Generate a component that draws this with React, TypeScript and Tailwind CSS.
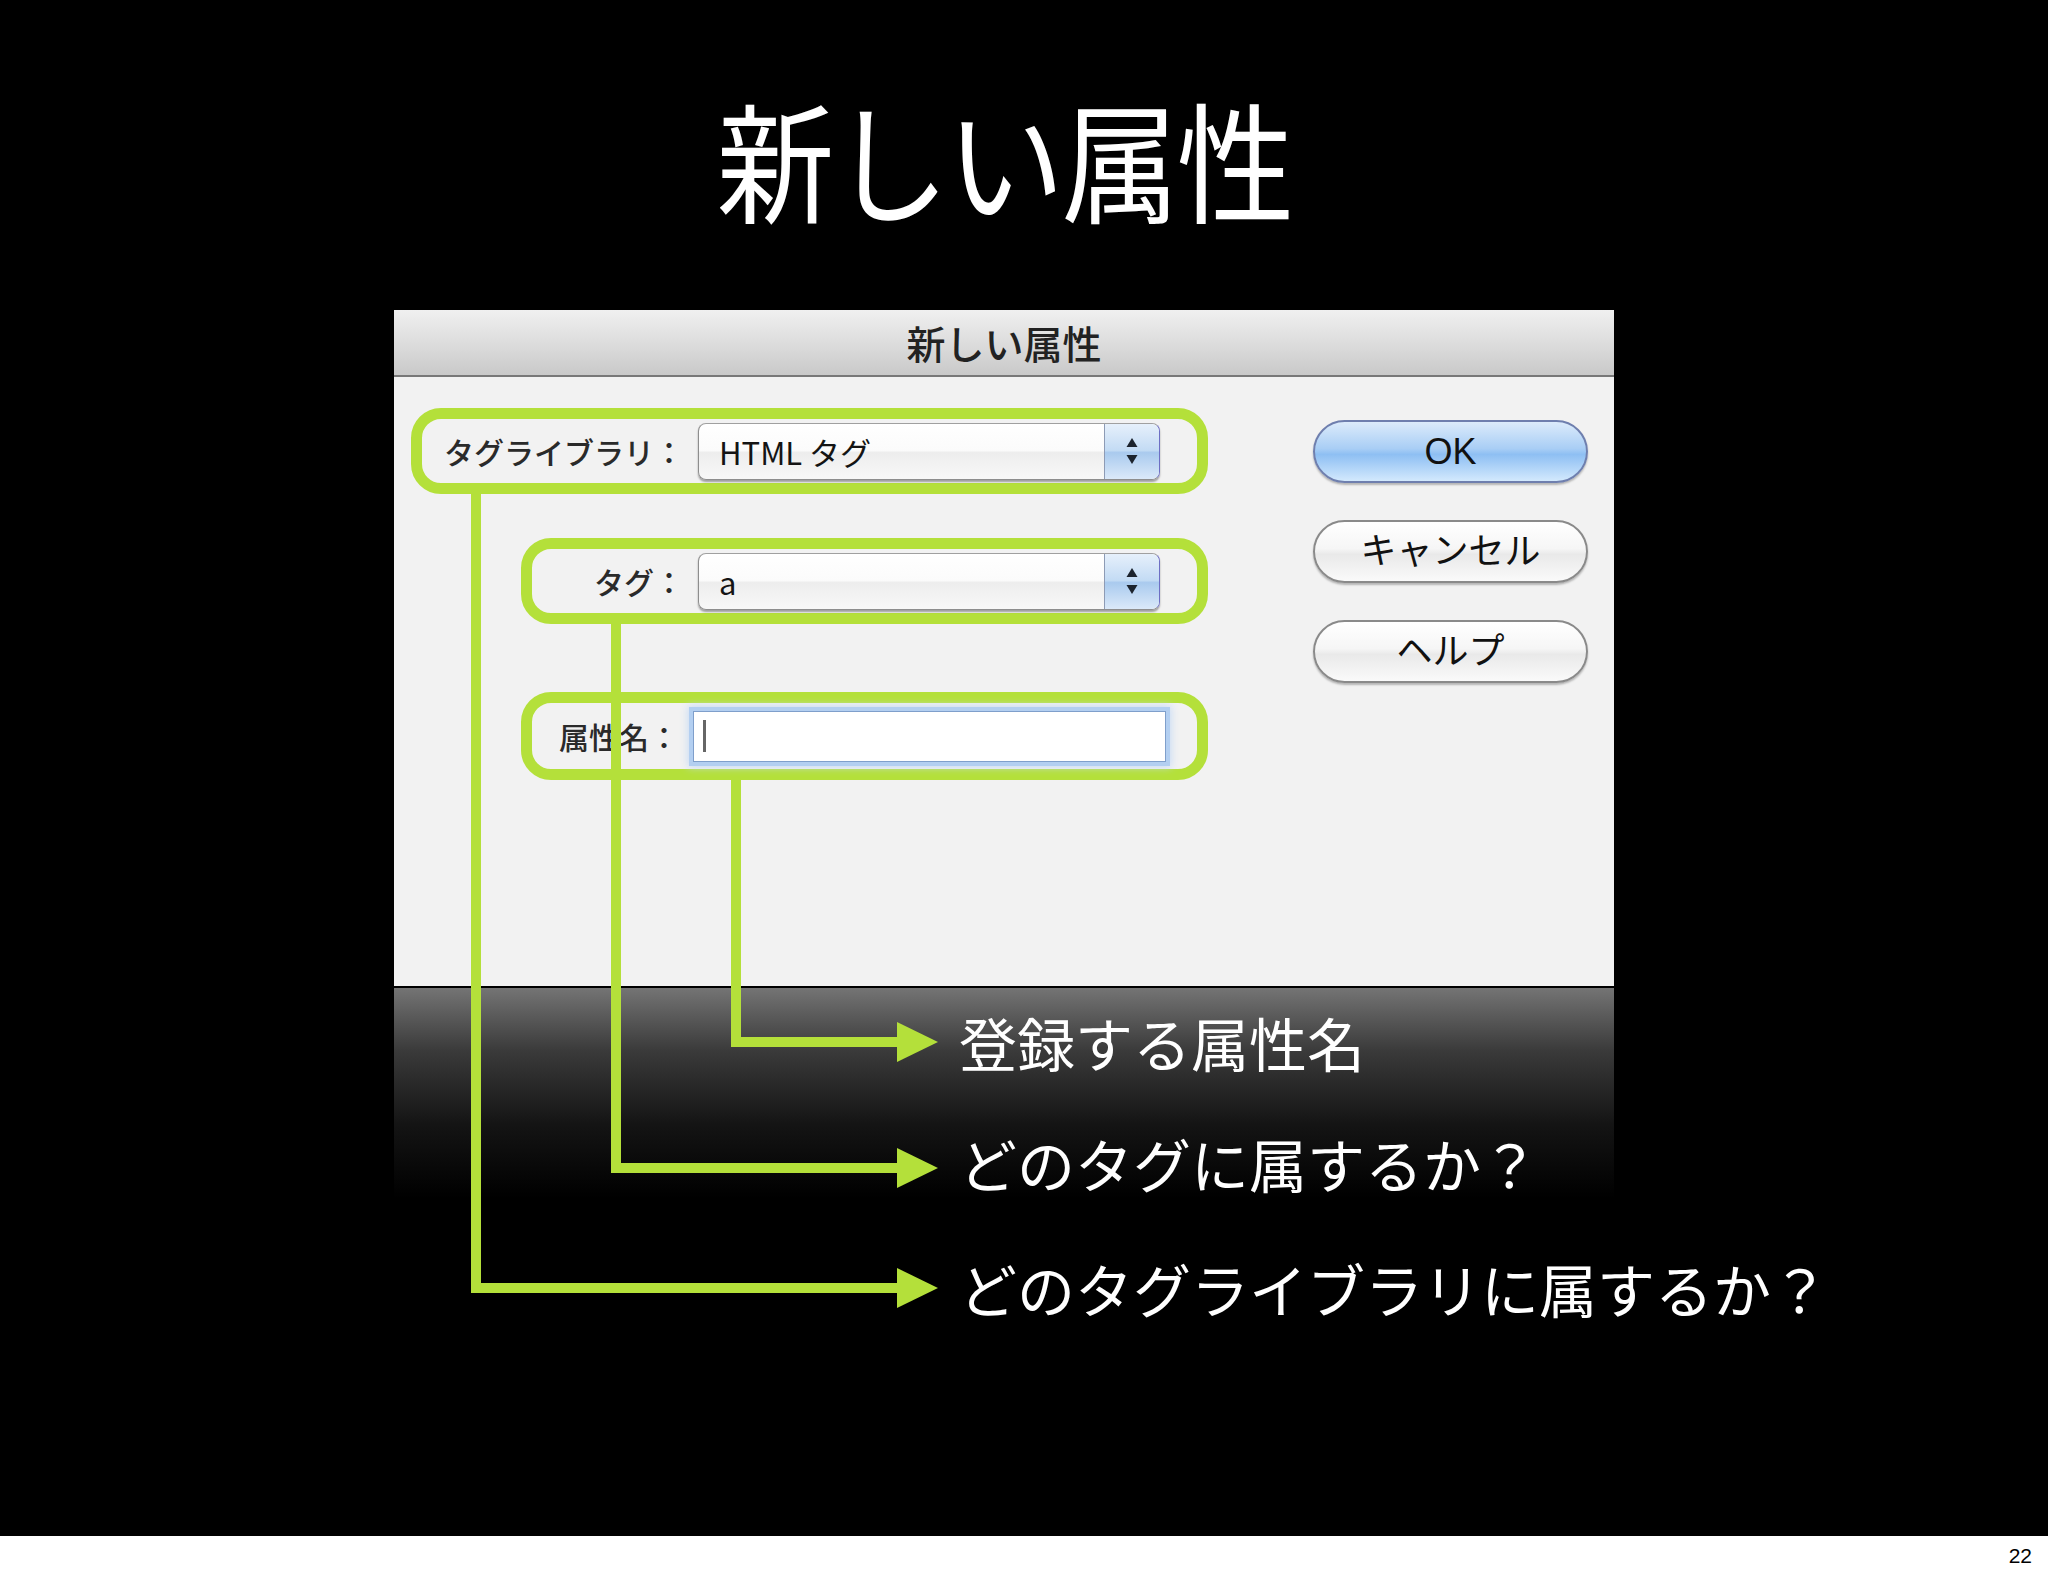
import React from 'react';

const JP = "font-['Noto_Sans_CJK_JP','Noto_Sans',sans-serif]";

function Stepper() {
  return (
    <div className="w-[55px] h-full border-l border-[#8d9bb5] rounded-r-[7px] bg-[linear-gradient(to_bottom,#e6f0fb,#c3dbf4_48%,#a9caee_52%,#dbe9f9)] flex items-center justify-center">
      <svg width="14" height="32" viewBox="0 0 14 32">
        <path d="M7 3 L12.5 12 H1.5 Z" fill="#1c232d" />
        <path d="M7 29 L12.5 20 H1.5 Z" fill="#1c232d" />
      </svg>
    </div>
  );
}

function Select({ value }: { value: string }) {
  return (
    <div className="w-[462px] h-[57px] rounded-[8px] border border-[#8e8e8e] border-r-[#6d6fc4] border-t-[#a0a0a0] bg-[linear-gradient(to_bottom,#ffffff,#fbfbfb_48%,#ededed_52%,#f8f8f8)] shadow-[0_2px_2px_rgba(0,0,0,0.35)] flex items-stretch overflow-hidden">
      <div className="flex-1 flex items-center pl-[20px] text-[31px] text-[#141414] leading-none">{value}</div>
      <Stepper />
    </div>
  );
}

function Field({ label, labelWidth, children, className }: { label: string; labelWidth: string; children: React.ReactNode; className: string }) {
  return (
    <div className={`border-[11px] border-[#b4e03a] rounded-[30px] flex items-center ${className}`}>
      <div className={`${labelWidth} text-right pr-[14px] text-[30px] font-medium text-[#2a2a2a] whitespace-nowrap`}>{label}</div>
      {children}
    </div>
  );
}

function AquaButton({ label, primary }: { label: string; primary?: boolean }) {
  return (
    <div
      className={`w-[275px] h-[63px] rounded-full border-2 flex items-center justify-center text-[36px] text-[#111] shadow-[0_2px_2px_rgba(0,0,0,0.25)] font-['Liberation_Sans','Noto_Sans_CJK_JP',sans-serif] ${
        primary
          ? 'border-[#6f7fae] bg-[linear-gradient(to_bottom,#dcebfb,#a9cef5_45%,#8ebff3_55%,#d3e9fd)]'
          : 'border-[#8a8a8a] bg-[linear-gradient(to_bottom,#ffffff,#f6f6f6_45%,#e9e9e9_55%,#fafafa)]'
      }`}
    >
      {label}
    </div>
  );
}

export default function App() {
  const green = '#b4e03a';
  return (
    <div className={`relative w-[2048px] h-[1576px] bg-black flex flex-col ${JP}`}>
      <div className="flex-1 flex flex-col">
        <div className="ml-[394px] w-[1220px] h-[310px] flex items-center justify-center pt-[4px] text-white text-[118px] leading-none tracking-[-3px]">
          <span className="scale-y-110">新しい属性</span>
        </div>

        <div className="ml-[394px] w-[1220px] flex flex-col">
          <div className="h-[67px] border-b-2 border-[#787878] bg-[linear-gradient(to_bottom,#f0f0f0,#d9d9d9_60%,#c9c9c9)] flex items-center justify-center text-[39px] font-medium text-[#222]">
            新しい属性
          </div>

          <div className="h-[611px] border-b-2 border-black bg-[#f2f2f2] flex items-start pl-[17px] pt-[31px]">
            <div className="w-[797px] flex flex-col">
              <Field label="タグライブラリ：" labelWidth="w-[276px]" className="w-[797px] h-[86px]">
                <Select value="HTML タグ" />
              </Field>
              <Field label="タグ：" labelWidth="w-[166px]" className="ml-[110px] mt-[44px] w-[687px] h-[86px]">
                <Select value="a" />
              </Field>
              <Field label="属性名：" labelWidth="w-[161px]" className="ml-[110px] mt-[68px] w-[687px] h-[88px]">
                <div className="w-[473px] h-[51px] bg-white border border-[#7f9fcb] shadow-[0_0_0_4px_#b3cff1,0_0_8px_5px_#c6daf5] flex items-center pl-[9px]">
                  <div className="w-[3px] h-[32px] bg-[#666]" />
                </div>
              </Field>
            </div>

            <div className="ml-[105px] mt-[12px] flex flex-col gap-[37px]">
              <AquaButton label="OK" primary />
              <AquaButton label="キャンセル" />
              <AquaButton label="ヘルプ" />
            </div>
          </div>

          <div className="bg-[linear-gradient(to_bottom,#747474,#3a3a3a_30%,#141414_65%,#000)] bg-no-repeat bg-[length:100%_210px] pl-[565px] flex flex-col text-white text-[58px] whitespace-nowrap">
            <div className="leading-[108px]">登録する属性名</div>
            <div className="leading-[134px]">どのタグに属するか？</div>
            <div className="leading-[116px]">どのタグライブラリに属するか？</div>
          </div>
        </div>
      </div>

      <div className="h-[40px] bg-white flex items-center justify-end pr-[16px] text-[21px] text-black font-['Liberation_Sans',sans-serif]">
        22
      </div>

      <svg className="absolute top-0 left-0 pointer-events-none" width="2048" height="1576" viewBox="0 0 2048 1576">
        <g fill="none" stroke={green} strokeWidth="10">
          <path d="M476 494 V1288 H900" />
          <path d="M616 624 V1168 H900" />
          <path d="M736 780 V1042 H900" />
        </g>
        <g fill={green}>
          <path d="M897 1022 L938 1042 L897 1062 Z" />
          <path d="M897 1148 L938 1168 L897 1188 Z" />
          <path d="M897 1268 L938 1288 L897 1308 Z" />
        </g>
      </svg>
    </div>
  );
}
